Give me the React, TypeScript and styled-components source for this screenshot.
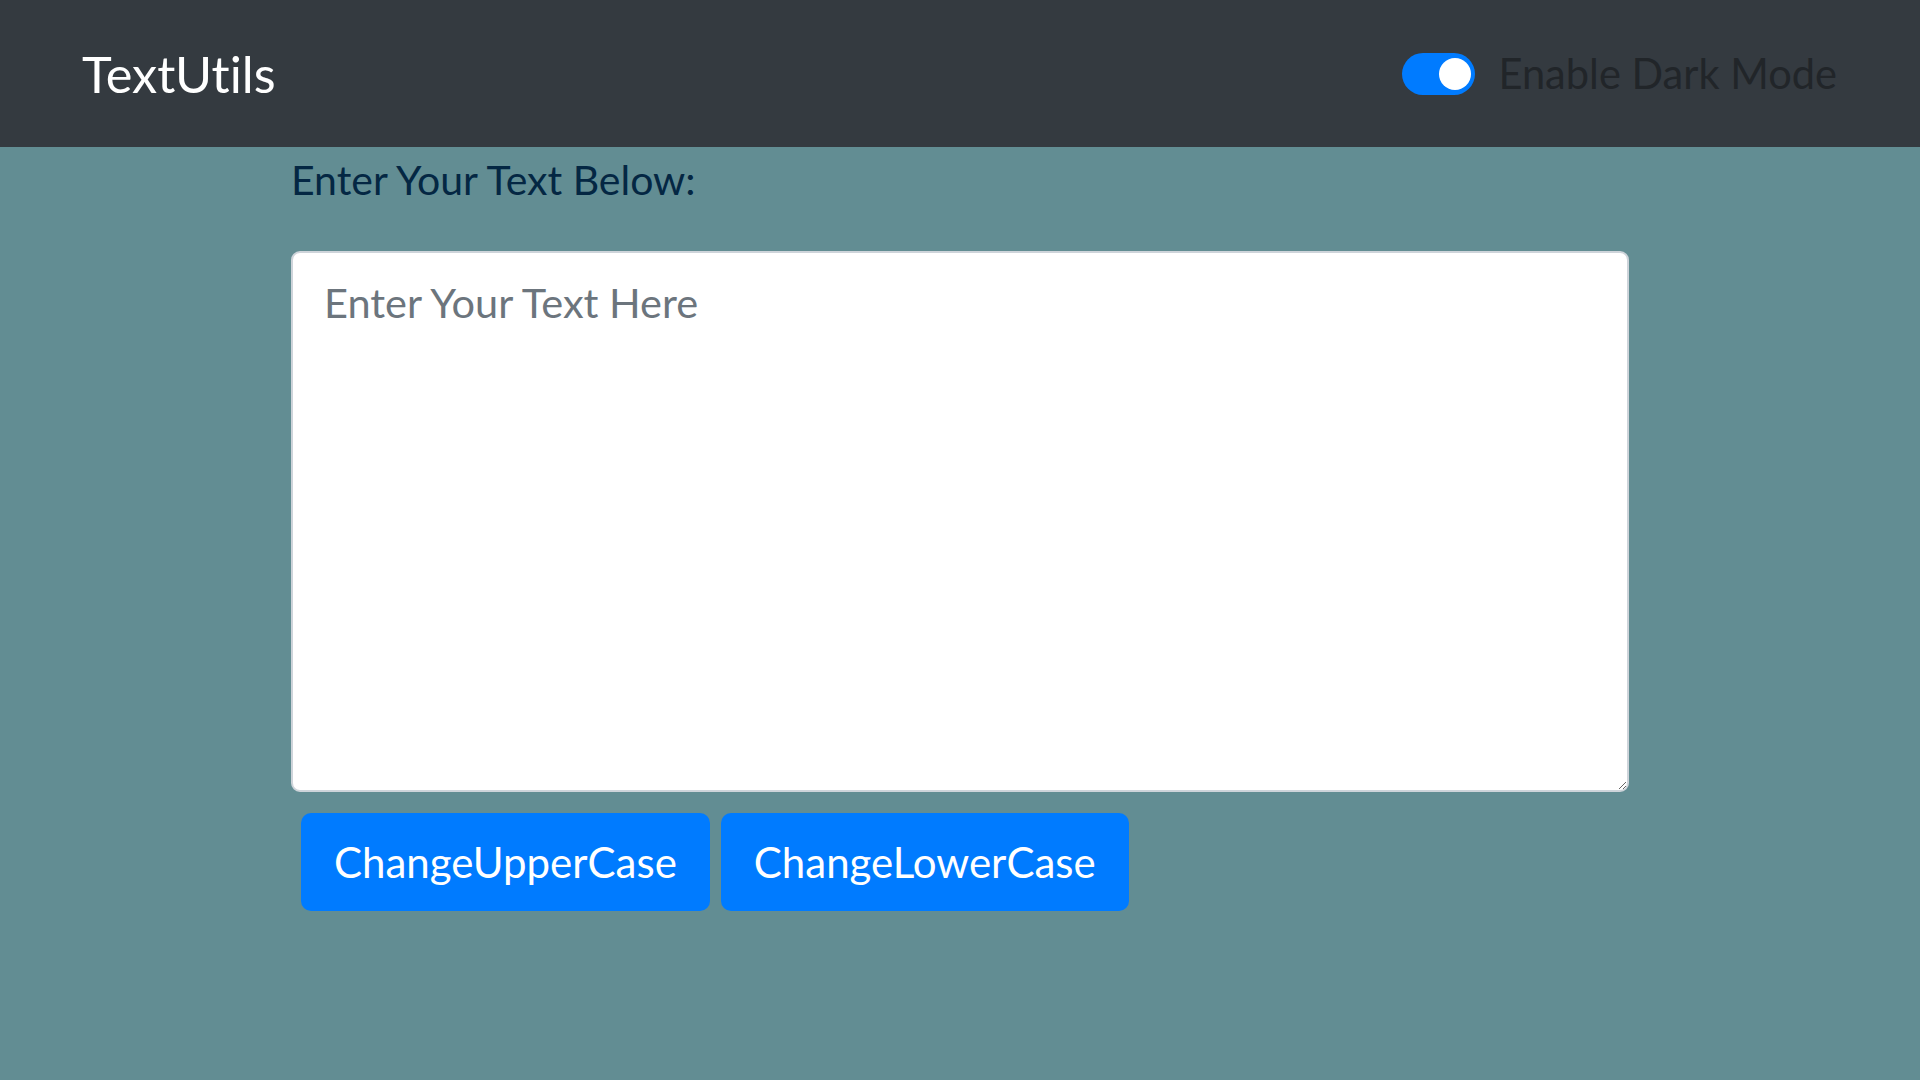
import React, { useState } from "react";
import styled, { createGlobalStyle } from "styled-components";

const GlobalStyle = createGlobalStyle`
  html, body {
    margin: 0;
    padding: 0;
    background: #628d93;
    font-family: "Lato", "Open Sans", sans-serif;
    font-variant-ligatures: none;
  }
  * { box-sizing: border-box; }
`;

const Navbar = styled.nav`
  height: 147px;
  background: #343a40;
  display: flex;
  align-items: center;
  justify-content: space-between;
  padding: 0 83px 0 82px;
`;

const Brand = styled.a`
  color: #ffffff;
  font-size: 50.5px;
  line-height: 1;
  text-decoration: none;
  margin-top: 2px;
`;

const SwitchRow = styled.label`
  display: flex;
  align-items: center;
  gap: 23px;
  cursor: pointer;
`;

const Track = styled.span<{ $on: boolean }>`
  position: relative;
  width: 73px;
  height: 42px;
  border-radius: 21px;
  background: ${(p) => (p.$on ? "#007bff" : "#ffffff")};
  flex-shrink: 0;
`;

const Knob = styled.span<{ $on: boolean }>`
  position: absolute;
  top: 5px;
  left: ${(p) => (p.$on ? "37px" : "5px")};
  width: 32px;
  height: 32px;
  border-radius: 50%;
  background: ${(p) => (p.$on ? "#ffffff" : "#adb5bd")};
`;

const SwitchLabel = styled.span`
  color: #212529;
  font-size: 41.6px;
  line-height: 1;
`;

const Container = styled.main`
  width: 1338px;
  margin: 0 auto;
  padding-top: 8px;
`;

const Heading = styled.h1`
  margin: 0;
  color: #042743;
  font-size: 41px;
  font-weight: 400;
  line-height: 1.2;
`;

const TextArea = styled.textarea`
  display: block;
  width: 100%;
  height: 541px;
  margin-top: 47px;
  padding: 24px 31px;
  border: 2px solid #ced4da;
  border-radius: 9px;
  background: #ffffff;
  font-family: inherit;
  font-size: 41.5px;
  color: #495057;
  resize: vertical;
  outline: none;
  &::placeholder {
    color: #6c757d;
  }
`;

const ButtonRow = styled.div`
  display: flex;
  gap: 11px;
  margin-top: 21px;
  padding-left: 10px;
`;

const Button = styled.button`
  height: 98px;
  padding: 0 33px;
  border: none;
  border-radius: 10px;
  background: #007bff;
  color: #ffffff;
  font-family: inherit;
  font-size: 42px;
  cursor: pointer;
`;

export default function App() {
  const [dark, setDark] = useState(true);
  const [text, setText] = useState("");
  return (
    <>
      <GlobalStyle />
      <Navbar>
        <Brand href="#">TextUtils</Brand>
        <SwitchRow onClick={() => setDark(!dark)}>
          <Track $on={dark}>
            <Knob $on={dark} />
          </Track>
          <SwitchLabel>Enable Dark Mode</SwitchLabel>
        </SwitchRow>
      </Navbar>
      <Container>
        <Heading>Enter Your Text Below:</Heading>
        <TextArea
          placeholder="Enter Your Text Here"
          value={text}
          onChange={(e) => setText(e.target.value)}
        />
        <ButtonRow>
          <Button onClick={() => setText(text.toUpperCase())}>ChangeUpperCase</Button>
          <Button onClick={() => setText(text.toLowerCase())}>ChangeLowerCase</Button>
        </ButtonRow>
      </Container>
    </>
  );
}
